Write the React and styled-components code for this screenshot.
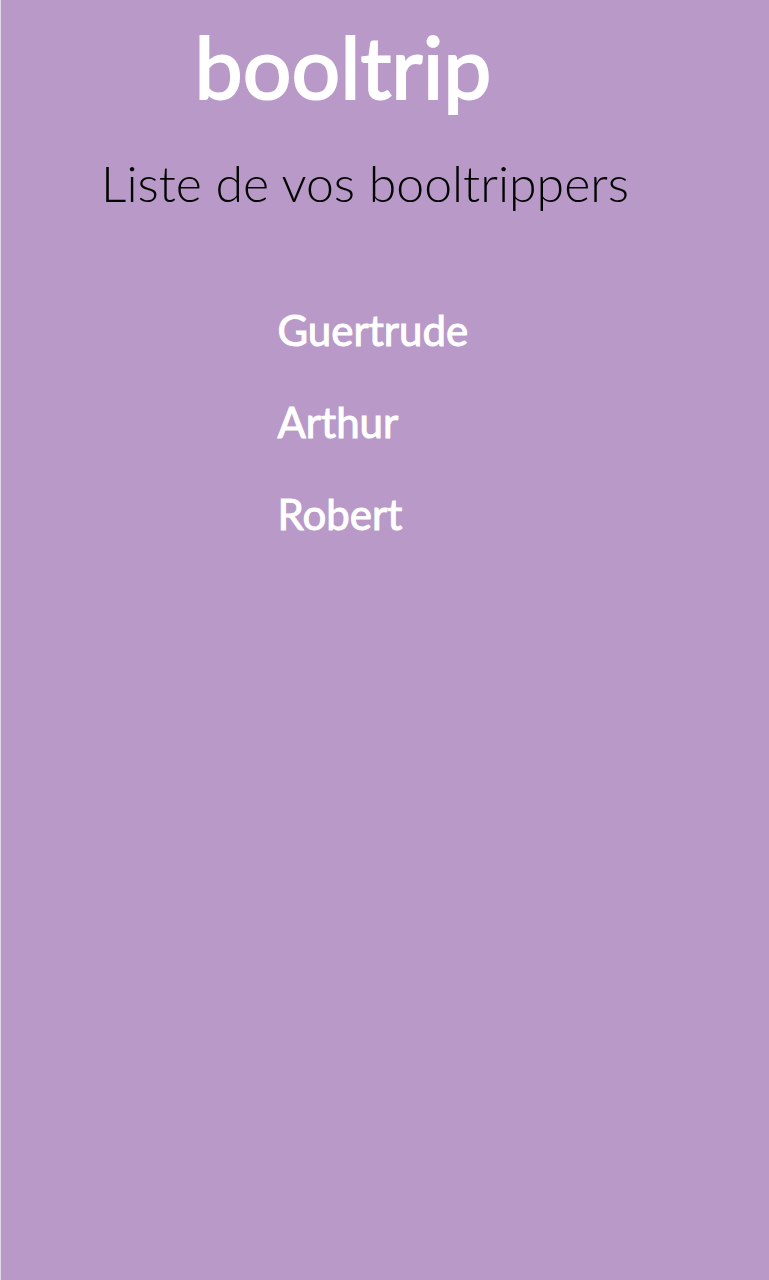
import React from "react";
import styled, { createGlobalStyle } from "styled-components";

const GlobalStyle = createGlobalStyle`
  * { box-sizing: border-box; }
  body { margin: 0; background: #b899c8; }
`;

const Page = styled.main`
  min-height: 100vh;
  padding: 18px 0;
  border-left: 1px solid #e3d7e9;
  background: #b899c8;
  color: #ffffff;
  font-family: Lato, "Open Sans", sans-serif;
`;

const Header = styled.header`
  padding-right: 84px;
  text-align: center;
`;

const Brand = styled.h1`
  margin: 0;
  font-size: 86px;
  line-height: 96px;
  font-weight: 400;
  -webkit-text-stroke: 2px currentColor;
`;

const Title = styled.h2`
  margin: 40px -44px 0 0;
  color: #000000;
  font-size: 50px;
  line-height: 58px;
  font-weight: 300;
`;

const List = styled.ul`
  display: flex;
  flex-direction: column;
  gap: 44px;
  margin: 94px 0 0;
  padding: 0 0 0 36%;
  list-style: none;
`;

const Tripper = styled.li`
  font-size: 42px;
  line-height: 48px;
  font-weight: 400;
  -webkit-text-stroke: 1px currentColor;
`;

const trippers = ["Guertrude", "Arthur", "Robert"];

export default function App() {
  return (
    <>
      <GlobalStyle />
      <Page>
        <Header>
          <Brand>booltrip</Brand>
          <Title>Liste de vos booltrippers</Title>
        </Header>
        <List>
          {trippers.map((name) => (
            <Tripper key={name}>{name}</Tripper>
          ))}
        </List>
      </Page>
    </>
  );
}
